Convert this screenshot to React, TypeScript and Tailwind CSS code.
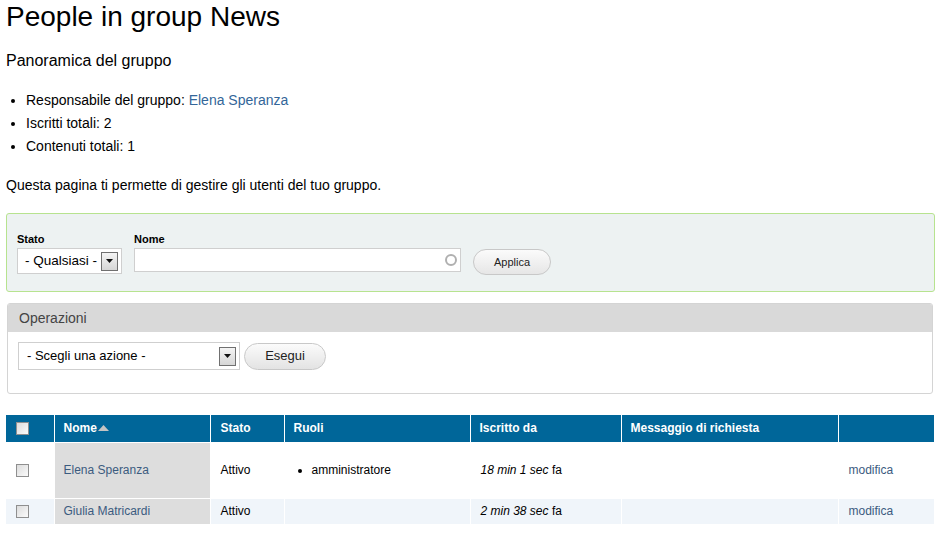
import React from 'react';

const font = { fontFamily: '"Liberation Sans", Arial, sans-serif' };

function SelectArrow() {
  return (
    <span className="flex h-[19px] w-[17px] shrink-0 items-center justify-center border border-[#707070] bg-gradient-to-b from-[#f4f4f4] to-[#d6d6d6]">
      <svg width="7" height="4" viewBox="0 0 7 4">
        <path d="M0 0h7L3.5 4z" fill="#111" />
      </svg>
    </span>
  );
}

function Checkbox() {
  return (
    <span className="block h-[13px] w-[13px] border border-[#8f8f8f] bg-gradient-to-br from-[#dcdcdc] to-[#fbfbfb]" />
  );
}

const rows = [
  { name: 'Elena Speranza', stato: 'Attivo', ruoli: ['amministratore'], da: ['18 min 1 sec', 'fa'], tall: true },
  { name: 'Giulia Matricardi', stato: 'Attivo', ruoli: [], da: ['2 min 38 sec', 'fa'], tall: false },
];

export default function App() {
  return (
    <div className="min-h-[533px] bg-white px-[6px] text-[#000]" style={font}>
      <h1 className="pt-[1px] text-[28px] leading-[32px]">People in group News</h1>
      <h2 className="mt-[18px] text-[16px] leading-[20px]">Panoramica del gruppo</h2>
      <ul className="mt-[18px] list-disc pl-[20px] text-[14px] leading-[23px]">
        <li>
          Responsabile del gruppo: <span className="text-[#336699]">Elena Speranza</span>
        </li>
        <li>Iscritti totali: 2</li>
        <li>Contenuti totali: 1</li>
      </ul>
      <p className="mt-[18px] text-[14px] leading-[18px]">Questa pagina ti permette di gestire gli utenti del tuo gruppo.</p>

      <div className="mt-[19px] flex h-[79px] w-[929px] items-end gap-[12px] rounded-[3px] border border-[#b7e38f] bg-[#edf2f2] px-[10px] pb-[17px]">
        <div className="flex flex-col">
          <label className="mb-[2px] text-[11px] font-bold leading-[14px]">Stato</label>
          <div className="flex h-[26px] w-[105px] items-center justify-between whitespace-nowrap border border-[#cfcfcf] bg-white pl-[7px] pr-[3px] text-[13.5px]">
            <span>- Qualsiasi -</span>
            <SelectArrow />
          </div>
        </div>
        <div className="flex flex-col">
          <label className="mb-[2px] text-[11px] font-bold leading-[14px]">Nome</label>
          <div className="mb-[2px] flex h-[24px] w-[327px] items-center justify-end border border-[#cfcfcf] bg-white pr-[3px]">
            <span className="h-[12px] w-[12px] rounded-full border-2 border-[#b0b0b0]" />
          </div>
        </div>
        <button className="mb-[-1px] h-[26px] w-[78px] rounded-full border border-[#c8c8c8] bg-gradient-to-b from-[#fbfbfb] to-[#e6e6e6] text-[11px] text-[#222]">
          Applica
        </button>
      </div>

      <div className="ml-[1px] mt-[11px] h-[91px] w-[926px] overflow-hidden rounded-[3px] border border-[#d4d4d4]">
        <div className="flex h-[28px] items-center bg-[#d9d9d9] px-[11px] text-[14px] text-[#444]">Operazioni</div>
        <div className="flex items-center gap-[4px] px-[10px] pt-[10px]">
          <div className="flex h-[28px] w-[222px] items-center justify-between whitespace-nowrap border border-[#cfcfcf] bg-white pl-[8px] pr-[3px] text-[13px]">
            <span>- Scegli una azione -</span>
            <SelectArrow />
          </div>
          <button className="h-[27px] w-[82px] rounded-full border border-[#c8c8c8] bg-gradient-to-b from-[#fbfbfb] to-[#e3e3e3] text-[13px] text-[#222]">
            Esegui
          </button>
        </div>
      </div>

      <table className="mt-[21px] w-[928px] border-collapse text-[12px]">
        <thead>
          <tr className="h-[27px] bg-[#006699] text-left font-bold text-white">
            <th className="w-[48px] border-r border-white pl-[10px]">
              <Checkbox />
            </th>
            <th className="w-[156px] border-r border-white pl-[9px]">
              <span className="inline-flex items-center gap-[1px]">
                Nome
                <svg width="11" height="6" viewBox="0 0 11 6">
                  <path d="M5.5 0L11 6H0z" fill="#c4c4c4" />
                </svg>
              </span>
            </th>
            <th className="w-[74px] border-r border-white pl-[10px]">Stato</th>
            <th className="w-[186px] border-r border-white pl-[9px]">Ruoli</th>
            <th className="w-[151px] border-r border-white pl-[9px]">Iscritto da</th>
            <th className="w-[217px] border-r border-white pl-[9px]">Messaggio di richiesta</th>
            <th />
          </tr>
        </thead>
        <tbody>
          {rows.map((r, i) => (
            <tr key={r.name} className={`${r.tall ? 'h-[56px]' : 'h-[26px]'} ${i % 2 ? 'bg-[#f0f5fa]' : 'bg-white'} border-t border-white`}>
              <td className="border-r border-white pl-[10px]">
                <Checkbox />
              </td>
              <td className="border-r border-white bg-[#dddddd] pl-[9px] text-[#3b5b7f]">{r.name}</td>
              <td className="border-r border-white pl-[10px]">{r.stato}</td>
              <td className="border-r border-white pl-[15px]">
                {r.ruoli.length > 0 && (
                  <ul className="list-disc pl-[12px]">
                    {r.ruoli.map((x) => (
                      <li key={x}>{x}</li>
                    ))}
                  </ul>
                )}
              </td>
              <td className="border-r border-white pl-[10px]">
                <em>{r.da[0]}</em> {r.da[1]}
              </td>
              <td className="border-r border-white" />
              <td className="pl-[10px] text-[#3b5b7f]">modifica</td>
            </tr>
          ))}
        </tbody>
      </table>
    </div>
  );
}
